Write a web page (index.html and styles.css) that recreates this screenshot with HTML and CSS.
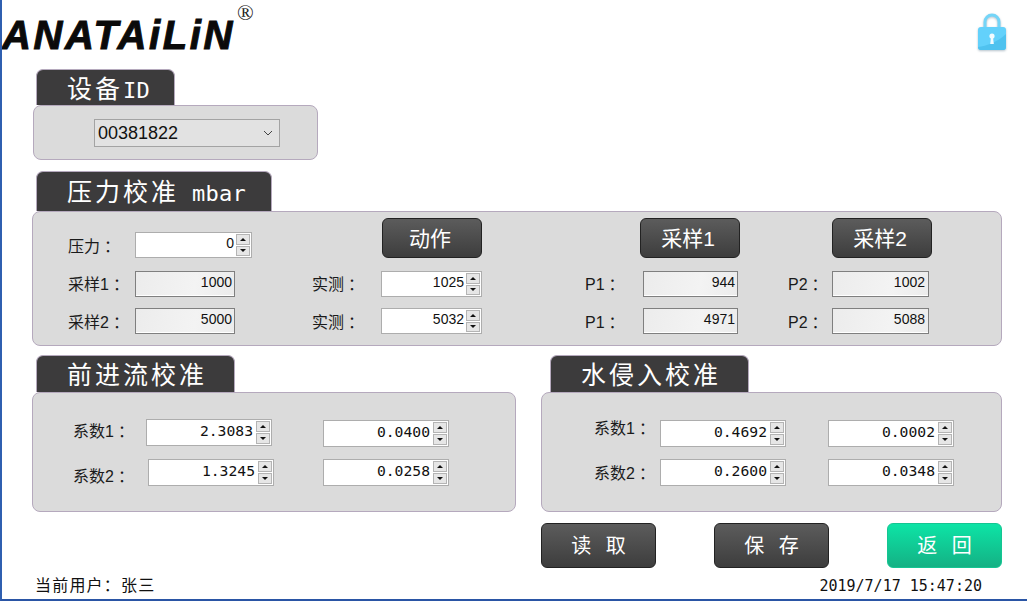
FILE: index.html
```html
<!DOCTYPE html>
<html lang="zh-CN">
<head>
    <meta charset="UTF-8">
    <meta name="viewport" content="width=device-width, initial-scale=1.0">
    <title>校准</title>
    <link rel="stylesheet" href="styles.css">
</head>
<body>
    <div class="page">
        <header class="header">
            <div class="logo">
                <span class="logo-name">ANATAiLiN</span>
                <span class="logo-mark">®</span>
            </div>
            <svg class="lock" width="32" height="40" viewBox="0 0 32 40">
                <path d="M9 16V10a7 7 0 0 1 14 0v6" fill="none" stroke="#74d5f8" stroke-width="3"/>
                <rect x="2" y="15" width="28" height="23" rx="3" fill="#63d1fb"/>
                <path d="M2 35c8-1 20-5 28-13v13a3 3 0 0 1-3 3H5a3 3 0 0 1-3-3z" fill="#4fc2ef"/>
                <circle cx="16" cy="24" r="2.6" fill="#f2fbff"/>
                <path d="M15 25h2l.8 7h-3.6z" fill="#f2fbff"/>
            </svg>
        </header>

        <main class="content">
            <section class="group group-device">
                <h2 class="tab tab-device">设备<span class="latin">ID</span></h2>
                <div class="panel panel-device">
                    <div class="select">
                        <span>00381822</span>
                        <svg width="10" height="6" viewBox="0 0 10 6"><path d="M1 1l4 4 4-4" fill="none" stroke="#444" stroke-width="1"/></svg>
                    </div>
                </div>
            </section>

            <section class="group group-pressure">
                <h2 class="tab tab-pressure">压力校准 <span class="latin">mbar</span></h2>
                <div class="panel panel-pressure">
                    <span class="label">压力<b class="colon">：</b></span>
                    <div class="spin spin-wide"><span class="val">0</span><span class="arrows"><i class="up"></i><i class="down"></i></span></div>
                    <span></span>
                    <span></span>
                    <button class="btn btn-small">动作</button>
                    <span></span>
                    <span></span>
                    <button class="btn btn-small">采样1</button>
                    <span></span>
                    <span></span>
                    <button class="btn btn-small">采样2</button>

                    <span class="label label-mid">采样1<b class="colon">：</b></span>
                    <div class="readout"><span class="val">1000</span></div>
                    <span></span>
                    <span class="label label-mid">实测<b class="colon">：</b></span>
                    <div class="spin"><span class="val">1025</span><span class="arrows"><i class="up"></i><i class="down"></i></span></div>
                    <span></span>
                    <span class="label label-mid">P1<b class="colon">：</b></span>
                    <div class="readout readout-p1"><span class="val">944</span></div>
                    <span></span>
                    <span class="label label-mid">P2<b class="colon">：</b></span>
                    <div class="readout readout-p2"><span class="val">1002</span></div>

                    <span class="label">采样2<b class="colon">：</b></span>
                    <div class="readout"><span class="val">5000</span></div>
                    <span></span>
                    <span class="label">实测<b class="colon">：</b></span>
                    <div class="spin"><span class="val">5032</span><span class="arrows"><i class="up"></i><i class="down"></i></span></div>
                    <span></span>
                    <span class="label">P1<b class="colon">：</b></span>
                    <div class="readout readout-p1"><span class="val">4971</span></div>
                    <span></span>
                    <span class="label">P2<b class="colon">：</b></span>
                    <div class="readout readout-p2"><span class="val">5088</span></div>
                </div>
            </section>

            <div class="pair">
                <section class="group group-flow">
                    <h2 class="tab tab-calib">前进流校准</h2>
                    <div class="panel panel-calib panel-flow">
                        <span class="label label-a">系数1<b class="colon">：</b></span>
                        <div class="spin spin-coef raise"><span class="val">2.3083</span><span class="arrows"><i class="up"></i><i class="down"></i></span></div>
                        <div class="spin spin-coef"><span class="val">0.0400</span><span class="arrows"><i class="up"></i><i class="down"></i></span></div>
                        <span class="label label-b">系数2<b class="colon">：</b></span>
                        <div class="spin spin-coef shift"><span class="val">1.3245</span><span class="arrows"><i class="up"></i><i class="down"></i></span></div>
                        <div class="spin spin-coef"><span class="val">0.0258</span><span class="arrows"><i class="up"></i><i class="down"></i></span></div>
                    </div>
                </section>

                <section class="group group-water">
                    <h2 class="tab tab-calib">水侵入校准</h2>
                    <div class="panel panel-calib panel-water">
                        <span class="label label-a">系数1<b class="colon">：</b></span>
                        <div class="spin spin-coef"><span class="val">0.4692</span><span class="arrows"><i class="up"></i><i class="down"></i></span></div>
                        <div class="spin spin-coef"><span class="val">0.0002</span><span class="arrows"><i class="up"></i><i class="down"></i></span></div>
                        <span class="label label-b">系数2<b class="colon">：</b></span>
                        <div class="spin spin-coef"><span class="val">0.2600</span><span class="arrows"><i class="up"></i><i class="down"></i></span></div>
                        <div class="spin spin-coef"><span class="val">0.0348</span><span class="arrows"><i class="up"></i><i class="down"></i></span></div>
                    </div>
                </section>
            </div>

            <div class="actions">
                <button class="btn btn-big">读 取</button>
                <button class="btn btn-big">保 存</button>
                <button class="btn btn-big btn-green">返 回</button>
            </div>

            <footer class="footer">
                <span class="user">当前用户：张三</span>
                <span class="clock">2019/7/17 15:47:20</span>
            </footer>
        </main>
    </div>
</body>
</html>
```

FILE: styles.css
```css
* { box-sizing: border-box; }
html, body { margin: 0; padding: 0; }
body { background: #fff; color: #111; font-family: "Liberation Sans", "Noto Sans CJK SC", sans-serif; overflow: hidden; }

.page { width: 1027px; height: 601px; border-left: 2px solid #2f5fb0; border-bottom: 2px solid #2a55a5; overflow: hidden; }

/* header */
.header { height: 69px; display: flex; justify-content: space-between; padding-right: 19px; }
.logo { display: flex; align-items: flex-start; }
.logo-name { margin-top: 15px; font-size: 40px; line-height: 40px; font-weight: bold; font-style: italic; letter-spacing: 2.6px; color: #0a0a0a; -webkit-text-stroke: 1px #0a0a0a; }
.logo-mark { margin-left: 2px; font-family: "Liberation Serif", serif; font-size: 22px; line-height: 25px; color: #222; }
.lock { margin-top: 12px; filter: drop-shadow(0 1px 1px rgba(90, 120, 140, 0.45)) blur(0.5px); }

/* sections */
.content { padding: 0 25px 0 30px; }
.group-device { margin-left: 1px; width: 285px; }
.group-pressure { margin-top: 11px; }
.pair { display: flex; gap: 25px; margin-top: 9px; }
.group-flow { width: 484px; }
.group-water { width: 461px; }

.tab { margin: 0 0 0 4px; background: #3c3b3c; color: #fff; font-weight: normal; font-size: 25px; letter-spacing: 3px; white-space: pre; border: 1px solid #b5a9bd; border-bottom: 0; border-radius: 7px 7px 0 0; padding-left: 30px; }
.latin { font-family: "DejaVu Sans Mono", monospace; font-size: 22px; letter-spacing: 0.3px; }
.tab-device { width: 139px; height: 36px; margin-left: 3px; line-height: 39px; }
.tab-pressure { width: 236px; height: 40px; line-height: 40px; word-spacing: 3px; }
.tab-calib { width: 199px; height: 37px; line-height: 39px; }
.group-water .tab-calib { margin-left: 9px; }

.panel { background: #dbdbdb; border: 1px solid #b5a9bd; border-radius: 8px; }
.panel-device { height: 55px; padding: 13px 0 0 60px; }
.panel-pressure { height: 135px; padding: 6px 0 0 35px; display: grid; grid-template-columns: 67px 117px 60px 69px 101px 103px 55px 100px 48px 44px 100px; grid-template-rows: 40px 39px 37px; align-items: end; }
.panel-calib { height: 120px; padding-top: 27px; display: grid; grid-template-rows: 27px 27px; row-gap: 12px; align-items: start; }
.panel-flow { padding-left: 40px; grid-template-columns: 73px 177px 126px; }
.panel-water { padding-left: 52px; grid-template-columns: 66px 168px 126px; }

/* controls */
.label { height: 26px; line-height: 29px; font-size: 16px; white-space: nowrap; color: #1a1a1a; }
.label-mid { line-height: 27px; }
.colon { font-weight: normal; margin-left: 4px; margin-right: -4px; }
.label-a { height: 27px; line-height: 29px; margin-top: -3px; }
.label-b { height: 27px; line-height: 27px; margin-top: 4px; }
.panel-water .label-a { margin-top: -6px; }
.panel-water .label-b { margin-top: 1px; }

.select { width: 186px; height: 28px; padding: 0 6px 0 3px; display: flex; align-items: center; justify-content: space-between; background: #e2e2e2; border: 1px solid #a3a3a3; font-size: 18px; }

.spin { width: 101px; height: 26px; display: flex; background: #fff; border: 1px solid #adadad; font-size: 14px; padding-right: 1px; }
.spin-wide { width: 117px; }
.spin-coef { width: 126px; height: 27px; font-family: "DejaVu Sans Mono", monospace; font-size: 14.7px; }
.spin .val { flex: 1; text-align: right; line-height: 20px; padding-right: 2px; }
.spin-coef .val { line-height: 21px; padding-right: 3px; }
.arrows { width: 14px; display: flex; flex-direction: column; gap: 1px; padding: 1px 0; }
.arrows i { flex: 1; display: flex; align-items: center; justify-content: center; background: #e6e6e6; border: 1px solid #b4b4b4; }
.up::before, .down::before { content: ""; border-left: 3px solid transparent; border-right: 3px solid transparent; }
.up::before { border-bottom: 3px solid #111; }
.down::before { border-top: 3px solid #111; }

.raise { margin-top: -1px; }
.shift { margin-left: 2px; }

.readout { width: 100px; height: 26px; background: linear-gradient(100deg, #ececec, #f3f3f3 60%, #ececec); border: 1px solid #7f7f7f; box-shadow: inset 0 -1px 0 #fff; font-size: 14px; text-align: right; padding-right: 2px; line-height: 20px; }
.readout-p1 { width: 95px; margin-left: 3px; }
.readout-p2 { width: 97px; padding-right: 3px; }

.btn { display: block; padding: 0 0 2px; color: #fff; font-family: inherit; background: linear-gradient(#5c5c5c, #3d3d3d); border: 1px solid #222; border-radius: 6px; cursor: pointer; }
.btn-small { width: 100px; height: 40px; font-size: 21px; justify-self: end; padding-right: 4px; }
.btn-big { width: 115px; height: 45px; font-size: 20px; word-spacing: 9px; }
.btn-green { background: linear-gradient(#0de4a6, #14b184); border-color: #15c592; }

.actions { display: flex; justify-content: flex-end; gap: 58px; margin-top: 11px; }

.footer { display: flex; justify-content: space-between; padding: 7px 20px 0 3px; font-size: 16px; line-height: 22px; }
.user { letter-spacing: 1.2px; }
.clock { font-family: "DejaVu Sans Mono", monospace; font-size: 15px; }
```
